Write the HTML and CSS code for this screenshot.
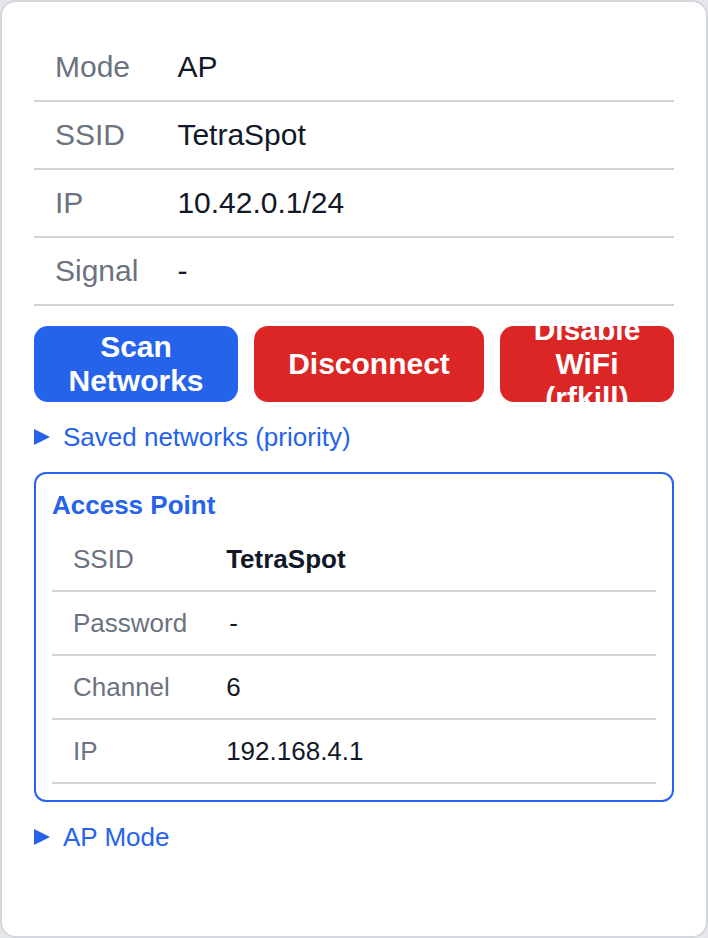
FILE: index.html
```html
<!DOCTYPE html>
<html lang="en">
<head>
<meta charset="utf-8">
<title>WiFi</title>
<link rel="stylesheet" href="styles.css">
</head>
<body>
<div class="card">
  <table class="info">
    <tr><td class="k">Mode</td><td class="v">AP</td></tr>
    <tr><td class="k">SSID</td><td class="v">TetraSpot</td></tr>
    <tr><td class="k">IP</td><td class="v">10.42.0.1/24</td></tr>
    <tr><td class="k">Signal</td><td class="v">-</td></tr>
  </table>
  <div class="actions">
    <button class="btn btn-blue">Scan Networks</button>
    <button class="btn btn-red">Disconnect</button>
    <button class="btn btn-red">Disable WiFi (rfkill)</button>
  </div>
  <details class="disc">
    <summary>Saved networks (priority)</summary>
  </details>
  <div class="ap">
    <div class="ap-title">Access Point</div>
    <table class="info small">
      <tr><td class="k">SSID</td><td class="v"><strong>TetraSpot</strong></td></tr>
      <tr><td class="k">Password</td><td class="v"><span class="pw">-</span></td></tr>
      <tr><td class="k">Channel</td><td class="v">6</td></tr>
      <tr><td class="k">IP</td><td class="v">192.168.4.1</td></tr>
    </table>
  </div>
  <details class="disc">
    <summary>AP Mode</summary>
  </details>
</div>
</body>
</html>
```
FILE: styles.css
```css
html, body {
  margin: 0;
  padding: 0;
  background: #e5e7eb;
}
body {
  font-family: "Liberation Sans", Arial, sans-serif;
  color: #111827;
}
.card {
  box-sizing: border-box;
  width: 708px;
  height: 938px;
  background: #ffffff;
  border: 2px solid #d4d7dd;
  border-radius: 16px;
  padding: 32px;
}
.info {
  width: 100%;
  border-collapse: collapse;
  font-size: 30px;
  line-height: 34px;
}
.info td {
  padding: 16px 20px;
  border-bottom: 2px solid #d1d5db;
  text-align: left;
  white-space: nowrap;
}
.info td.k {
  color: #6b7280;
  width: 1%;
  padding-left: 21px;
}
.info td.v {
  color: #111827;
  padding-left: 19px;
}
.info.small {
  font-size: 26px;
  line-height: 30px;
}
.info.small strong {
  font-weight: 700;
}
.pw {
  margin-left: 3px;
}
.actions {
  display: grid;
  grid-template-columns: 204px 230px 174px;
  gap: 16px;
  margin-top: 20px;
}
.btn {
  height: 76px;
  border: none;
  border-radius: 14px;
  color: #ffffff;
  font-family: "Liberation Sans", Arial, sans-serif;
  font-size: 30px;
  font-weight: 700;
  line-height: 34px;
  padding: 0 12px;
  display: flex;
  align-items: center;
  justify-content: center;
  text-align: center;
  overflow: visible;
}
.btn-blue { background: #2563eb; }
.btn-red { background: #dc2626; }
.disc {
  margin-top: 20px;
}
.disc summary {
  list-style: none;
  display: flex;
  align-items: center;
  color: #2563eb;
  font-size: 26px;
  line-height: 30px;
  cursor: pointer;
}
.disc summary::-webkit-details-marker { display: none; }
.disc summary::before {
  content: "";
  width: 0;
  height: 0;
  border-left: 16px solid #2563eb;
  border-top: 8.5px solid transparent;
  border-bottom: 8.5px solid transparent;
  margin-left: 0;
  margin-right: 13px;
}
.ap {
  margin-top: 20px;
  border: 2px solid #2563eb;
  border-radius: 12px;
  padding: 16px;
}
.ap-title {
  color: #2563eb;
  font-size: 26px;
  font-weight: 700;
  line-height: 30px;
  margin-bottom: 8px;
}
```
